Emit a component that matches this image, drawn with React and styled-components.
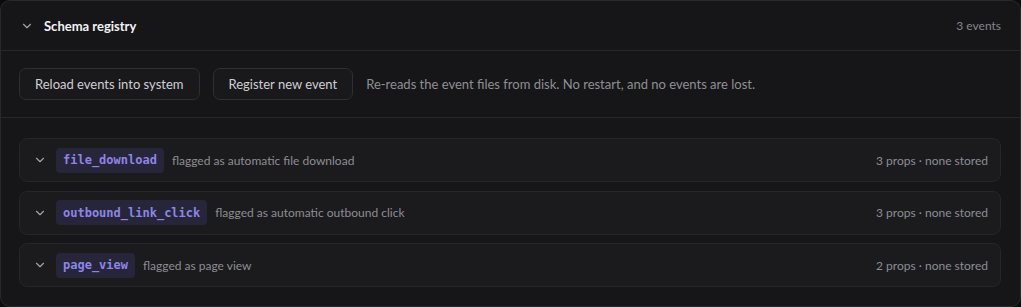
import React from "react";
import styled, { createGlobalStyle } from "styled-components";

const GlobalStyle = createGlobalStyle`
  html, body {
    margin: 0;
    padding: 0;
    background: #0c0c0e;
  }
  body {
    font-family: Lato, "Noto Sans", sans-serif;
    color: #e6e6ea;
  }
`;

const events = [
  { name: "file_download", desc: "flagged as automatic file download", props: 3 },
  { name: "outbound_link_click", desc: "flagged as automatic outbound click", props: 3 },
  { name: "page_view", desc: "flagged as page view", props: 2 },
];

const Chevron = ({ size = 14, color = "#a2a2a8" }) => (
  <svg width={size} height={size} viewBox="0 0 24 24" fill="none" stroke={color} strokeWidth="2" strokeLinecap="round" strokeLinejoin="round">
    <path d="M6 9l6 6 6-6" />
  </svg>
);

const App = () => {
  return (
    <>
      <GlobalStyle />
      <Panel>
        <Header>
          <HeaderLeft>
            <Chevron />
            <Title>Schema registry</Title>
          </HeaderLeft>
          <Count>3 events</Count>
        </Header>

        <Toolbar>
          <Button>Reload events into system</Button>
          <Button>Register new event</Button>
          <Hint>Re-reads the event files from disk. No restart, and no events are lost.</Hint>
        </Toolbar>

        <List>
          {events.map((ev) => (
            <Card key={ev.name}>
              <CardLeft>
                <Chevron />
                <Badge>{ev.name}</Badge>
                <Desc>{ev.desc}</Desc>
              </CardLeft>
              <Meta>{ev.props} props · none stored</Meta>
            </Card>
          ))}
        </List>
      </Panel>
    </>
  );
};

export default App;

const Panel = styled.div`
  box-sizing: border-box;
  width: 1021px;
  height: 307px;
  background: #161618;
  border: 1px solid #29292d;
  border-radius: 10px;
  overflow: hidden;
`;

const Header = styled.div`
  height: 49px;
  display: flex;
  align-items: center;
  justify-content: space-between;
  padding: 0 19px 0 19px;
  border-bottom: 1px solid #28282c;
`;

const HeaderLeft = styled.div`
  display: flex;
  align-items: center;
  gap: 10px;
`;

const Title = styled.span`
  font-size: 13px;
  font-weight: 700;
  color: #f2f2f5;
`;

const Count = styled.span`
  font-size: 12px;
  color: #85858b;
`;

const Toolbar = styled.div`
  height: 66px;
  display: flex;
  align-items: center;
  gap: 13px;
  padding: 0 18px;
  border-bottom: 1px solid #28282c;
`;

const Button = styled.button`
  box-sizing: border-box;
  height: 32px;
  padding: 0 15px;
  background: #19191c;
  border: 1px solid #2e2e33;
  border-radius: 7px;
  font-family: inherit;
  font-size: 13px;
  color: #cfcfd4;
`;

const Hint = styled.span`
  font-size: 13px;
  color: #8f8f95;
`;

const List = styled.div`
  display: flex;
  flex-direction: column;
  gap: 8.5px;
  padding: 20px 19px 0 18px;
`;

const Card = styled.div`
  box-sizing: border-box;
  height: 44px;
  display: flex;
  align-items: center;
  justify-content: space-between;
  padding: 0 12px 0 13px;
  background: #1b1b1e;
  border: 1px solid #26262a;
  border-radius: 8px;
`;

const CardLeft = styled.div`
  display: flex;
  align-items: center;
  gap: 8px;
`;

const Badge = styled.span`
  display: inline-flex;
  align-items: center;
  height: 25px;
  padding: 0 7px;
  margin-left: 1px;
  background: #27253a;
  border-radius: 4px;
  font-family: "DejaVu Sans Mono", monospace;
  font-size: 12px;
  font-weight: 700;
  color: #8c86e6;
`;

const Desc = styled.span`
  font-size: 12px;
  color: #8d8d93;
`;

const Meta = styled.span`
  font-size: 12px;
  color: #8d8d93;
`;
